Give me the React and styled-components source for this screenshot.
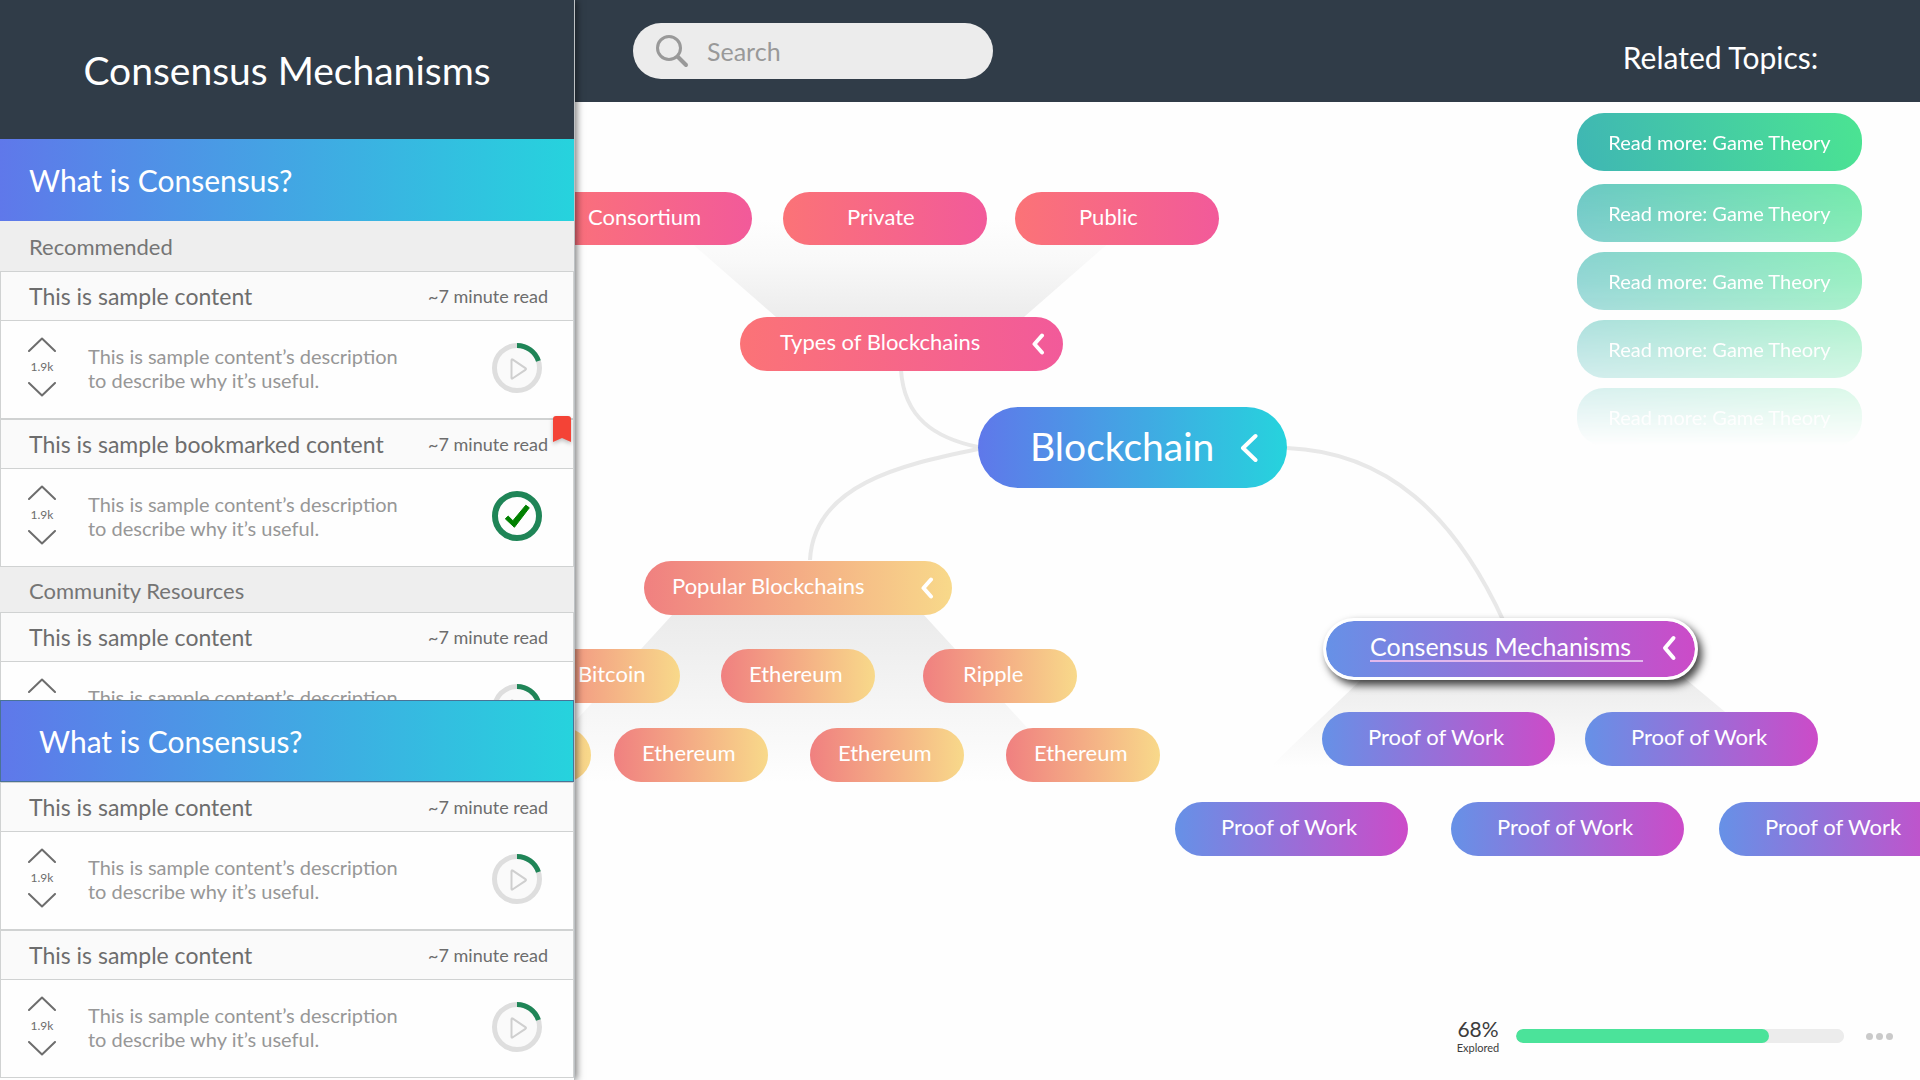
import React from "react";
import styled, { createGlobalStyle, css } from "styled-components";

const GlobalStyle = createGlobalStyle`
  *, *::before, *::after { box-sizing: border-box; }
  body {
    margin: 0;
    background: #fefefe;
    font-family: Lato, "Liberation Sans", sans-serif;
    color: #6d6d6d;
  }
  h1, h2, h3, p, ul { margin: 0; padding: 0; font-weight: 400; }
  ul { list-style: none; }
  button, input { font: inherit; }
  button { border: 0; padding: 0; background: none; color: inherit; cursor: pointer; }
`;

const oceanGradient = "linear-gradient(90deg, #5f78ea, #26d3dd)";

const gradients = {
  ocean: oceanGradient,
  rose: "linear-gradient(90deg, #fb7377, #f25a9a)",
  peach: "linear-gradient(90deg, #f08080, #f8d98a)",
  violet: "linear-gradient(90deg, #6691e7, #cc4bc8)",
};

/* ---------- Page ---------- */

const Page = styled.div`
  display: flex;
  height: 100vh;
  overflow: hidden;
`;

const Sidebar = styled.aside`
  position: relative;
  z-index: 2;
  flex: none;
  width: clamp(420px, 30vw, 575px);
  display: flex;
  flex-direction: column;
  background: #fefefe;
  border-right: 1px solid #bdc1c4;
  box-shadow: 2px 0 7px rgba(0, 0, 0, 0.5);
`;

const Main = styled.main`
  flex: 1;
  min-width: 0;
  display: flex;
  flex-direction: column;
`;

/* ---------- Sidebar ---------- */

const SidebarTitle = styled.header`
  flex: none;
  height: 139px;
  display: flex;
  align-items: center;
  justify-content: center;
  background: #303c48;
  color: #fff;

  h1 { font-size: 39px; line-height: 48px; }
`;

const Section = styled.section`
  ${(p) =>
    p.$grow
      ? css`flex: 1; min-height: 0; overflow: hidden;`
      : css`flex: none; padding-bottom: 2px;`}
`;

const Banner = styled.h2`
  display: flex;
  align-items: center;
  height: 82px;
  padding: 0 29px;
  background: ${oceanGradient};
  color: #fff;
  font-size: 30px;
  line-height: 36px;
  ${(p) => p.$outlined && css`
    padding: 0 38px;
    border: 1px solid #4a7396;
  `}
`;

const GroupLabel = styled.h3`
  display: flex;
  align-items: center;
  height: ${(p) => (p.$compact ? 45 : 50)}px;
  padding: 2px 29px 0;
  background: #eee;
  color: #757575;
  font-size: 22px;
  line-height: 28px;
`;

const Item = styled.article`
  position: relative;
  border: 1px solid #d0d2d2;
`;

const ItemHead = styled.div`
  display: flex;
  align-items: center;
  justify-content: space-between;
  height: 49px;
  padding: 0 25px 0 28px;
  background: #fafafa;
  border-bottom: 1px solid #d0d2d2;
`;

const ItemTitle = styled.h3`
  font-size: 23px;
  line-height: 28px;
`;

const ReadTime = styled.span`
  font-size: 18px;
  line-height: 24px;
`;

const ItemBody = styled.div`
  display: flex;
  align-items: center;
  height: 97px;
  padding: 0 31px 4px 27px;
`;

const Votes = styled.div`
  width: 28px;
  display: flex;
  flex-direction: column;
  align-items: center;
  gap: 7px;
  padding-bottom: 2px;
  font-size: 12px;
  line-height: 16px;

  svg { display: block; }
`;

const Description = styled.p`
  flex: 1;
  padding-left: 32px;
  color: #979797;
  font-size: 20px;
  line-height: 24px;
`;

const DescriptionText = styled.span`
  display: block;
  max-width: 320px;
`;

const StatusButton = styled.button`
  width: 50px;
  height: 50px;

  svg { display: block; }
`;

const BookmarkFlag = styled.svg`
  position: absolute;
  top: -4px;
  right: 2px;
  filter: drop-shadow(0 2px 2px rgba(0, 0, 0, 0.25));
`;

/* ---------- Top bar ---------- */

const TopBar = styled.header`
  flex: none;
  height: 102px;
  display: flex;
  align-items: center;
  justify-content: space-between;
  padding: 0 57px 0 58px;
  background: #303c48;
`;

const SearchBox = styled.label`
  display: flex;
  align-items: center;
  gap: 18px;
  width: 360px;
  height: 56px;
  padding: 0 22px;
  border-radius: 28px;
  background: #ececec;

  svg { flex: none; }

  input {
    flex: 1;
    min-width: 0;
    border: 0;
    padding: 0;
    outline: 0;
    background: none;
    color: #555;
    font-size: 25px;
    line-height: 30px;
  }
  input::placeholder { color: #999; opacity: 1; }
`;

const RelatedTitle = styled.h2`
  width: 285px;
  padding-top: 12px;
  color: #fff;
  font-size: 30px;
  line-height: 36px;
  text-align: center;
`;

/* ---------- Map ---------- */

const MapArea = styled.div`
  position: relative;
  flex: 1;
  min-height: 0;
  overflow: hidden;
  display: flex;
  flex-direction: column;
  align-items: flex-end;
  justify-content: space-between;
`;

const Diagram = styled.div`
  position: absolute;
  inset: 0;
`;

const Wires = styled.svg`
  position: absolute;
  inset: 0;
  width: 100%;
  height: 100%;
`;

const Node = styled.button`
  position: absolute;
  left: ${(p) => p.$x}px;
  top: ${(p) => p.$y}px;
  width: ${(p) => p.$w}px;
  height: ${(p) => p.$h}px;
  padding: 0 18px 0 ${(p) => p.$indent}px;
  display: flex;
  align-items: center;
  justify-content: space-between;
  border-radius: ${(p) => p.$h / 2}px;
  background: ${(p) => gradients[p.$tone]};
  color: #fff;
  font-size: ${(p) => p.$size}px;
  line-height: 1;
  white-space: nowrap;

  span { padding-bottom: 4px; }

  ${(p) => p.$tone === "ocean" && css`
    padding-right: 29px;

    span { padding-bottom: 2px; }
  `}
  ${(p) => p.$selected && css`
    padding-bottom: 2px;
    border: 3px solid #fff;
    background: ${gradients[p.$tone]} padding-box, #fff;
    box-shadow: 4px 5px 9px rgba(0, 0, 0, 0.75);

    span {
      padding: 0 12px 1px 0;
      border-bottom: 2px solid #e2b8ec;
    }
  `}
`;

const RelatedList = styled.ul`
  position: relative;
  width: 285px;
  margin: 11px 58px 0 0;
  display: flex;
  flex-direction: column;
  gap: 10px;
  mask-image: linear-gradient(
    180deg,
    #000 60px,
    rgba(0, 0, 0, 0.8) 61px,
    rgba(0, 0, 0, 0.55) 170px,
    transparent 333px
  );

  li:first-child { margin-bottom: 3px; }
`;

const RelatedLink = styled.a`
  display: flex;
  align-items: center;
  justify-content: center;
  height: 58px;
  border-radius: 27px;
  background: linear-gradient(75deg, #3fb6b4, #4be492);
  color: #fff;
  font-size: 20px;
  line-height: 24px;
  text-decoration: none;
`;

const Explored = styled.footer`
  position: relative;
  display: flex;
  align-items: center;
  padding: 0 27px 25px 0;
`;

const ExploredLabel = styled.label`
  display: flex;
  flex-direction: column;
  align-items: center;
  width: 44px;
  margin-right: 16px;
  color: #3c3c3c;
  font-size: 11px;
  line-height: 14px;

  strong {
    font-weight: 400;
    font-size: 21px;
    line-height: 24px;
  }
`;

const Meter = styled.progress`
  appearance: none;
  display: block;
  width: 328px;
  height: 14px;
  border: 0;
  border-radius: 7px;
  overflow: hidden;
  background: #ececec;

  &::-webkit-progress-bar { background: #ececec; border-radius: 7px; }
  &::-webkit-progress-value { background: #4be39a; border-radius: 7px; }
  &::-moz-progress-bar { background: #4be39a; border-radius: 7px; }
`;

const MoreButton = styled.button`
  display: flex;
  gap: 3px;
  margin-left: 22px;

  i {
    width: 7px;
    height: 7px;
    border-radius: 50%;
    background: #cacaca;
  }
`;

/* ---------- Drawings ---------- */

const VoteArrow = ({ down }) => (
  <svg width="28" height="15" viewBox="0 0 28 15" fill="none" stroke="#6d6d6d" strokeWidth="2" strokeLinejoin="round" strokeLinecap="round" aria-hidden="true">
    <path d={down ? "M1 1L14 13.5L27 1" : "M1 14L14 1.5L27 14"} />
  </svg>
);

const PlayRing = () => (
  <svg width="50" height="50" viewBox="0 0 50 50" fill="none" aria-hidden="true">
    <circle cx="25" cy="25" r="22.5" fill="#fafafa" stroke="#dedede" strokeWidth="5" />
    <path d="M25 2.5A22.5 22.5 0 0 1 46.4 18" stroke="#1f8557" strokeWidth="5" />
    <path d="M19.5 17.2V34.8Q19.5 36.2 20.8 35.3L33.4 26.8Q34.6 26 33.4 25.2L20.8 16.7Q19.5 15.8 19.5 17.2Z" stroke="#cfcfcf" strokeWidth="2" />
  </svg>
);

const CheckRing = () => (
  <svg width="50" height="50" viewBox="0 0 50 50" fill="none" aria-hidden="true">
    <circle cx="25" cy="25" r="22" stroke="#1f8557" strokeWidth="6" />
    <path d="M13.3 27.8L16.2 25.1L20.9 29.7L33.8 14.2L37.3 16.8L22.4 36.3Z" fill="#008000" stroke="#008000" strokeWidth="1" strokeLinejoin="round" />
  </svg>
);

const chevrons = {
  small: { w: 14, h: 22, d: "M11 2.5L3.5 11L11 19.5" },
  medium: { w: 16, h: 26, d: "M12.5 3L4 13L12.5 23" },
  large: { w: 18, h: 30, d: "M15.5 3L3 15L15.5 27" },
};

const Chevron = ({ size }) => {
  const { w, h, d } = chevrons[size];
  return (
    <svg width={w} height={h} viewBox={`0 0 ${w} ${h}`} fill="none" stroke="#fff" strokeWidth="4" strokeLinecap="round" strokeLinejoin="round" aria-hidden="true">
      <path d={d} />
    </svg>
  );
};

const MapWires = () => (
  <Wires aria-hidden="true">
    <defs>
      <linearGradient id="fanUp" x1="0" y1="1" x2="0" y2="0">
        <stop offset="0" stopColor="#ececec" />
        <stop offset="0.6" stopColor="#f9f9f9" />
        <stop offset="1" stopColor="#fefefe" />
      </linearGradient>
      <linearGradient id="fanDown" x1="0" y1="0" x2="0" y2="1">
        <stop offset="0" stopColor="#ebebeb" />
        <stop offset="1" stopColor="#fefefe" />
      </linearGradient>
    </defs>
    <path d="M90 118H560L449 215H201Z" fill="url(#fanUp)" />
    <path d="M98 512H348L502 680H-55Z" fill="url(#fanDown)" />
    <path d="M790 574H1107L1216 665H695Z" fill="url(#fanDown)" />
    <g fill="none" stroke="#e8e8e8" strokeWidth="4">
      <path d="M326 268C329 316 360 336 403 345" />
      <path d="M403 347C325 363 239 383 235 458" />
      <path d="M712 346C812 350 880 413 929 520" />
    </g>
  </Wires>
);

/* ---------- Data ---------- */

const nodes = [
  { label: "Consortium", tone: "rose", x: -27, y: 90, w: 204, h: 53, indent: 40 },
  { label: "Private", tone: "rose", x: 208, y: 90, w: 204, h: 53, indent: 64 },
  { label: "Public", tone: "rose", x: 440, y: 90, w: 204, h: 53, indent: 64 },
  { label: "Types of Blockchains", tone: "rose", x: 165, y: 215, w: 323, indent: 40, chevron: "small" },
  { label: "Blockchain", tone: "ocean", x: 403, y: 305, w: 309, h: 81, size: 39, indent: 52, chevron: "large" },
  { label: "Popular Blockchains", tone: "peach", x: 69, y: 459, w: 308, indent: 28, chevron: "small" },
  { label: "Bitcoin", tone: "peach", x: -49, y: 547, w: 154, indent: 52 },
  { label: "Ethereum", tone: "peach", x: 146, y: 547, w: 154, indent: 28 },
  { label: "Ripple", tone: "peach", x: 348, y: 547, w: 154, indent: 40 },
  { label: "Ethereum", tone: "peach", x: -138, y: 626, w: 154, indent: 28 },
  { label: "Ethereum", tone: "peach", x: 39, y: 626, w: 154, indent: 28 },
  { label: "Ethereum", tone: "peach", x: 235, y: 626, w: 154, indent: 28 },
  { label: "Ethereum", tone: "peach", x: 431, y: 626, w: 154, indent: 28 },
  { label: "Consensus Mechanisms", tone: "violet", x: 748, y: 516, w: 375, h: 62, size: 25, indent: 44, chevron: "medium", selected: true },
  { label: "Proof of Work", tone: "violet", x: 747, y: 610, w: 233, indent: 46 },
  { label: "Proof of Work", tone: "violet", x: 1010, y: 610, w: 233, indent: 46 },
  { label: "Proof of Work", tone: "violet", x: 600, y: 700, w: 233, indent: 46 },
  { label: "Proof of Work", tone: "violet", x: 876, y: 700, w: 233, indent: 46 },
  { label: "Proof of Work", tone: "violet", x: 1144, y: 700, w: 233, indent: 46 },
];

const related = Array(5).fill("Read more: Game Theory");

/* ---------- Parts ---------- */

function ContentItem({ title = "This is sample content", bookmarked, done }) {
  return (
    <Item>
      <ItemHead>
        <ItemTitle>{title}</ItemTitle>
        <ReadTime>~7 minute read</ReadTime>
      </ItemHead>
      <ItemBody>
        <Votes>
          <button aria-label="Vote up"><VoteArrow /></button>
          <span>1.9k</span>
          <button aria-label="Vote down"><VoteArrow down /></button>
        </Votes>
        <Description>
          <DescriptionText>This is sample content’s description to describe why it’s useful.</DescriptionText>
        </Description>
        <StatusButton aria-label={done ? "Completed" : "Play"}>
          {done ? <CheckRing /> : <PlayRing />}
        </StatusButton>
      </ItemBody>
      {bookmarked && (
        <BookmarkFlag width="18" height="26" viewBox="0 0 18 26" aria-hidden="true">
          <path d="M3 0H15Q18 0 18 3V26L9 22L0 26V3Q0 0 3 0Z" fill="#f44336" />
        </BookmarkFlag>
      )}
    </Item>
  );
}

export default function App() {
  return (
    <Page>
      <GlobalStyle />
      <Sidebar>
        <SidebarTitle><h1>Consensus Mechanisms</h1></SidebarTitle>
        <Section $grow>
          <Banner>What is Consensus?</Banner>
          <GroupLabel>Recommended</GroupLabel>
          <ContentItem />
          <ContentItem title="This is sample bookmarked content" bookmarked done />
          <GroupLabel $compact>Community Resources</GroupLabel>
          <ContentItem />
        </Section>
        <Section>
          <Banner $outlined>What is Consensus?</Banner>
          <ContentItem />
          <ContentItem />
        </Section>
      </Sidebar>

      <Main>
        <TopBar>
          <SearchBox>
            <svg width="34" height="34" viewBox="0 0 34 34" fill="none" stroke="#999" strokeLinecap="round" aria-hidden="true">
              <circle cx="14" cy="14" r="11.5" strokeWidth="3" />
              <path d="M23 23L31 31" strokeWidth="4" />
            </svg>
            <input type="search" placeholder="Search" aria-label="Search" />
          </SearchBox>
          <RelatedTitle>Related Topics:</RelatedTitle>
        </TopBar>

        <MapArea>
          <Diagram>
            <MapWires />
            {nodes.map((n, i) => (
              <Node
                key={i}
                $x={n.x}
                $y={n.y}
                $w={n.w}
                $h={n.h || 54}
                $size={n.size || 22}
                $indent={n.indent}
                $tone={n.tone}
                $selected={n.selected}
              >
                <span>{n.label}</span>
                {n.chevron && <Chevron size={n.chevron} />}
              </Node>
            ))}
          </Diagram>

          <RelatedList>
            {related.map((text, i) => (
              <li key={i}><RelatedLink href="#">{text}</RelatedLink></li>
            ))}
          </RelatedList>

          <Explored>
            <ExploredLabel htmlFor="explored"><strong>68%</strong>Explored</ExploredLabel>
            <Meter id="explored" value="77" max="100" />
            <MoreButton aria-label="More options"><i /><i /><i /></MoreButton>
          </Explored>
        </MapArea>
      </Main>
    </Page>
  );
}
